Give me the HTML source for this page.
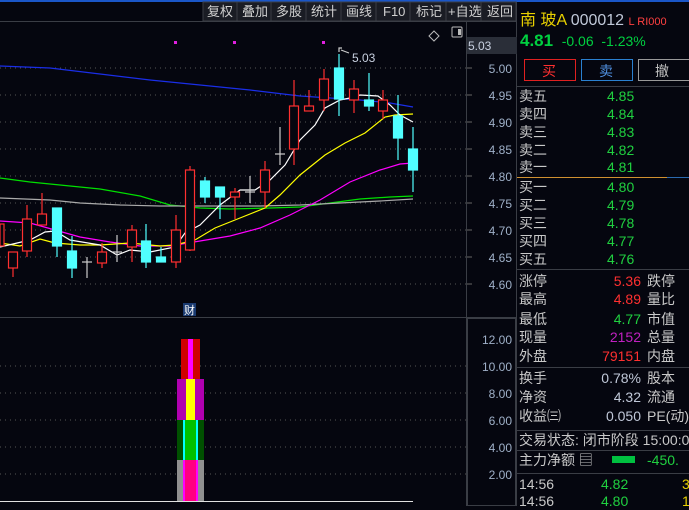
<!DOCTYPE html>
<html><head><meta charset="utf-8"><style>
*{margin:0;padding:0;box-sizing:border-box}
body{width:689px;height:506px;background:#05060f;overflow:hidden;position:relative;font-family:"Liberation Sans","Noto Sans CJK SC",sans-serif;}
.a{position:absolute;white-space:nowrap}
.r{position:absolute;left:519px;width:170px;height:18px;font-size:14px;line-height:18px;color:#c8c8c8;white-space:nowrap}
.r span{position:absolute;white-space:nowrap}
</style></head><body>
<svg class="a" style="left:0;top:0" width="689" height="506">
<rect x="0" y="0" width="689" height="2" fill="#1a56c8"/>
<g fill="#1a1c24" stroke="#3a3d45"><rect x="203" y="2" width="313" height="19"/></g>
<g stroke="#3a3d45"><line x1="237" y1="2" x2="237" y2="21"/><line x1="271" y1="2" x2="271" y2="21"/><line x1="306" y1="2" x2="306" y2="21"/><line x1="341" y1="2" x2="341" y2="21"/><line x1="376" y1="2" x2="376" y2="21"/><line x1="410" y1="2" x2="410" y2="21"/><line x1="446" y1="2" x2="446" y2="21"/><line x1="481" y1="2" x2="481" y2="21"/></g>
<line x1="0" y1="21.5" x2="516" y2="21.5" stroke="#3a3d45"/>
<g font-size="13" fill="#d0d0d0" font-family="Liberation Sans,Noto Sans CJK SC,sans-serif">
<text x="207" y="16">复权</text><text x="242" y="16">叠加</text><text x="276" y="16">多股</text><text x="311" y="16">统计</text><text x="346" y="16">画线</text><text x="383" y="16">F10</text><text x="416" y="16">标记</text><text x="448" y="16">+自选</text><text x="487" y="16">返回</text>
</g>
<line x1="466.5" y1="22" x2="466.5" y2="506" stroke="#3a3d45"/>
<line x1="516.5" y1="2" x2="516.5" y2="506" stroke="#3a3d45"/>
<line x1="0" y1="317.5" x2="516" y2="317.5" stroke="#3a3d45"/>
<rect x="467" y="37" width="50" height="17" fill="#2a2e38"/>
<text x="468" y="50" font-size="12" fill="#c8d0e0">5.03</text>
<g stroke="#555" stroke-dasharray="1,4">
<line x1="0" y1="68" x2="466" y2="68"/><line x1="0" y1="95" x2="466" y2="95"/><line x1="0" y1="122" x2="466" y2="122"/><line x1="0" y1="149" x2="466" y2="149"/><line x1="0" y1="176" x2="466" y2="176"/><line x1="0" y1="203" x2="466" y2="203"/><line x1="0" y1="230" x2="466" y2="230"/><line x1="0" y1="257" x2="466" y2="257"/><line x1="0" y1="284" x2="466" y2="284"/>
<line x1="0" y1="366" x2="466" y2="366"/><line x1="0" y1="393" x2="466" y2="393"/><line x1="0" y1="420" x2="466" y2="420"/><line x1="0" y1="447" x2="466" y2="447"/><line x1="0" y1="474" x2="466" y2="474"/>
</g>
<g stroke="#666"><line x1="467" y1="68" x2="472" y2="68"/><line x1="467" y1="95" x2="472" y2="95"/><line x1="467" y1="122" x2="472" y2="122"/><line x1="467" y1="149" x2="472" y2="149"/><line x1="467" y1="176" x2="472" y2="176"/><line x1="467" y1="203" x2="472" y2="203"/><line x1="467" y1="230" x2="472" y2="230"/><line x1="467" y1="257" x2="472" y2="257"/><line x1="467" y1="284" x2="472" y2="284"/></g>
<g font-size="12" fill="#9fb0c8" text-anchor="end">
<text x="512" y="73">5.00</text><text x="512" y="100">4.95</text><text x="512" y="127">4.90</text><text x="512" y="154">4.85</text><text x="512" y="181">4.80</text><text x="512" y="208">4.75</text><text x="512" y="235">4.70</text><text x="512" y="262">4.65</text><text x="512" y="289">4.60</text>
<text x="512" y="344">12.00</text><text x="512" y="371">10.00</text><text x="512" y="398">8.00</text><text x="512" y="425">6.00</text><text x="512" y="452">4.00</text><text x="512" y="479">2.00</text>
</g>
<rect x="467.5" y="318.5" width="48" height="187" fill="none" stroke="#3a3d45"/>
<path d="M434 31 l5 5 -5 5 -5 -5z" fill="none" stroke="#bbb"/>
<rect x="452" y="27" width="10" height="10" fill="none" stroke="#bbb" rx="1"/><rect x="458" y="29" width="3" height="6" fill="#bbb"/>
<g fill="#e020e0"><rect x="174" y="41" width="3" height="3"/><rect x="233" y="41" width="3" height="3"/><rect x="322" y="41" width="3" height="3"/></g>
<g fill="none" stroke-width="1.2">
<polyline stroke="#1a2ee8" points="0,66 50,68 100,74 150,80 200,85 250,90 300,96 330,98 360,100 390,103 413,107"/>
<polyline stroke="#00e000" points="0,178 30,182 60,185 100,189 140,196 170,205 200,208 230,209 270,208 300,207 330,203 360,199 390,197 413,196"/>
<polyline stroke="#aaaaaa" points="0,198 50,200 80,203 120,205 160,206 200,206 260,206 300,205 340,203 380,201 413,199"/>
<polyline stroke="#ff00ff" points="0,221 30,223 55,230 80,237 110,242 140,246 170,246 200,241 230,236 260,228 290,215 320,200 350,182 380,170 400,164 413,163"/>
<polyline stroke="#ffff00" points="0,243 20,246 40,239 55,243 80,245 100,245 130,243 160,246 175,245 195,240 215,228 240,218 265,208 280,195 300,175 325,155 345,143 365,133 385,117 395,115 413,114"/>
<polyline stroke="#ffffff" points="0,247 30,240 45,232 55,231 70,240 100,245 117,255 130,250 150,252 175,247 185,233 200,225 220,205 240,190 255,190 270,180 285,165 300,140 315,125 325,108 340,100 350,98 360,95 378,96 390,105 400,115 413,122"/>
</g>
<g stroke="#ff3030" fill="#05060f" stroke-width="1.2">
<rect x="0" y="224" width="4" height="22"/>
<line x1="13" y1="268" x2="13" y2="277"/><rect x="8.5" y="252" width="9" height="16"/>
<line x1="27" y1="205" x2="27" y2="257"/><rect x="22.5" y="219" width="9" height="32"/>
<line x1="42" y1="193" x2="42" y2="214"/><rect x="37.5" y="214" width="9" height="11"/>
<line x1="102" y1="243" x2="102" y2="268"/><rect x="97.5" y="252" width="9" height="11"/>
<line x1="132" y1="225" x2="132" y2="262"/><rect x="127.5" y="230" width="9" height="17"/>
<line x1="176" y1="215" x2="176" y2="268"/><rect x="171.5" y="230" width="9" height="32"/>
<line x1="190" y1="166" x2="190" y2="251"/><rect x="185.5" y="170" width="9" height="80"/>
<line x1="235" y1="188" x2="235" y2="219"/><rect x="230.5" y="192" width="9" height="5"/>
<line x1="265" y1="161" x2="265" y2="208"/><rect x="260.5" y="170" width="9" height="22"/>
<line x1="294" y1="80" x2="294" y2="165"/><rect x="289.5" y="106" width="9" height="43"/>
<line x1="309" y1="90" x2="309" y2="106"/><rect x="304.5" y="106" width="9" height="5"/>
<line x1="324" y1="69" x2="324" y2="111"/><rect x="319.5" y="79" width="9" height="21"/>
<line x1="354" y1="80" x2="354" y2="113"/><rect x="349.5" y="89" width="9" height="11"/>
<line x1="383" y1="90" x2="383" y2="119"/><rect x="378.5" y="100" width="9" height="11"/>
</g>
<g stroke="#50ffff" fill="#50ffff" stroke-width="1.2">
<line x1="57" y1="208" x2="57" y2="257"/><rect x="52.5" y="208" width="9" height="38"/>
<line x1="72" y1="236" x2="72" y2="278"/><rect x="67.5" y="251" width="9" height="17"/>
<line x1="146" y1="224" x2="146" y2="268"/><rect x="141.5" y="241" width="9" height="21"/>
<line x1="161" y1="247" x2="161" y2="262"/><rect x="156.5" y="257" width="9" height="5"/>
<line x1="205" y1="177" x2="205" y2="203"/><rect x="200.5" y="181" width="9" height="16"/>
<line x1="220" y1="187" x2="220" y2="219"/><rect x="215.5" y="187" width="9" height="10"/>
<line x1="339" y1="54" x2="339" y2="116"/><rect x="334.5" y="68" width="9" height="31"/>
<line x1="369" y1="73" x2="369" y2="111"/><rect x="364.5" y="100" width="9" height="6"/>
<line x1="398" y1="95" x2="398" y2="160"/><rect x="393.5" y="116" width="9" height="22"/>
<line x1="413" y1="127" x2="413" y2="192"/><rect x="408.5" y="149" width="9" height="21"/>
</g>
<g stroke="#cccccc" stroke-width="1.2">
<line x1="87" y1="257" x2="87" y2="278"/><line x1="82" y1="262" x2="92" y2="262"/>
<line x1="117" y1="235" x2="117" y2="262"/><line x1="112" y1="252" x2="122" y2="252"/>
<line x1="250" y1="176" x2="250" y2="203"/><line x1="245" y1="192" x2="255" y2="192"/>
<line x1="280" y1="127" x2="280" y2="165"/><line x1="275" y1="154" x2="285" y2="154"/>
<path d="M339 52 V48 h3 M341 50 l8 3" fill="none"/>
</g>
<text x="352" y="62" font-size="12" fill="#c8d0e0">5.03</text>
<rect x="183" y="303" width="13" height="13" fill="#1a3a70"/>
<text x="184" y="314" font-size="11" fill="#fff">财</text>
<rect x="181" y="339" width="19" height="40" fill="#d00000"/><rect x="188" y="339" width="5" height="40" fill="#ff00ff"/>
<rect x="177" y="379" width="27" height="41" fill="#b000b0"/><rect x="186" y="379" width="9" height="41" fill="#ffff00"/>
<rect x="177" y="420" width="27" height="40" fill="#005000"/><rect x="183" y="420" width="15" height="40" fill="#00ffff"/><rect x="185" y="420" width="11" height="40" fill="#00c000"/>
<rect x="177" y="460" width="27" height="42" fill="#909090"/><rect x="183" y="460" width="15" height="42" fill="#ff00ff"/><rect x="185" y="460" width="11" height="42" fill="#ff0080"/>
<line x1="0" y1="501.5" x2="413" y2="501.5" stroke="#e0e0e0"/>
<g stroke="#3a3d45"><line x1="517" y1="86.5" x2="689" y2="86.5"/><line x1="517" y1="269.5" x2="689" y2="269.5"/><line x1="517" y1="367.5" x2="689" y2="367.5"/><line x1="517" y1="430.5" x2="689" y2="430.5"/><line x1="517" y1="450.5" x2="689" y2="450.5"/><line x1="517" y1="473.5" x2="689" y2="473.5"/></g>
<line x1="517" y1="177.5" x2="667" y2="177.5" stroke="#d09030"/><line x1="667" y1="177.5" x2="689" y2="177.5" stroke="#2a6ab0"/>
<rect x="524.5" y="59.5" width="51" height="21" fill="none" stroke="#e02020"/>
<rect x="581.5" y="59.5" width="51" height="21" fill="none" stroke="#2a80d0"/>
<rect x="638.5" y="59.5" width="51" height="21" fill="none" stroke="#999"/>
<rect x="612" y="456" width="23" height="7" fill="#00c040"/>
</svg>
<div class="a" style="left:520px;top:6px;font-size:16px;color:#e8d000">南 玻A <span style="color:#c0c8d8">000012</span> <span style="font-size:11px;color:#ff4040">L RI000</span></div>
<div class="a" style="left:520px;top:31px;font-size:17px;color:#00d040;font-weight:bold">4.81 <span style="font-weight:normal;font-size:14px">&nbsp;-0.06 &nbsp;-1.23%</span></div>
<div class="a" style="left:542px;top:61px;font-size:14px;color:#ff3030">买</div>
<div class="a" style="left:599px;top:61px;font-size:14px;color:#5090e0">卖</div>
<div class="a" style="left:655px;top:61px;font-size:14px;color:#c0c0c0">撤</div>
<div class="r" style="top:87px"><span>卖五</span><span style="left:88px;color:#20d040">4.85</span></div>
<div class="r" style="top:105px"><span>卖四</span><span style="left:88px;color:#20d040">4.84</span></div>
<div class="r" style="top:123px"><span>卖三</span><span style="left:88px;color:#20d040">4.83</span></div>
<div class="r" style="top:141px"><span>卖二</span><span style="left:88px;color:#20d040">4.82</span></div>
<div class="r" style="top:158px"><span>卖一</span><span style="left:88px;color:#20d040">4.81</span></div>
<div class="r" style="top:178px"><span>买一</span><span style="left:88px;color:#20d040">4.80</span></div>
<div class="r" style="top:196px"><span>买二</span><span style="left:88px;color:#20d040">4.79</span></div>
<div class="r" style="top:214px"><span>买三</span><span style="left:88px;color:#20d040">4.78</span></div>
<div class="r" style="top:232px"><span>买四</span><span style="left:88px;color:#20d040">4.77</span></div>
<div class="r" style="top:250px"><span>买五</span><span style="left:88px;color:#20d040">4.76</span></div>
<div class="r" style="top:272px"><span>涨停</span><span style="right:48px;color:#ff3030">5.36</span><span style="left:128px">跌停</span></div>
<div class="r" style="top:290px"><span>最高</span><span style="right:48px;color:#ff3030">4.89</span><span style="left:128px">量比</span></div>
<div class="r" style="top:310px"><span>最低</span><span style="right:48px;color:#20d040">4.77</span><span style="left:128px">市值</span></div>
<div class="r" style="top:328px"><span>现量</span><span style="right:48px;color:#c020c0">2152</span><span style="left:128px">总量</span></div>
<div class="r" style="top:347px"><span>外盘</span><span style="right:48px;color:#ff3030">79151</span><span style="left:128px">内盘</span></div>
<div class="r" style="top:369px"><span>换手</span><span style="right:48px;color:#c0c8d8">0.78%</span><span style="left:128px">股本</span></div>
<div class="r" style="top:388px"><span>净资</span><span style="right:48px;color:#c0c8d8">4.32</span><span style="left:128px">流通</span></div>
<div class="r" style="top:407px"><span>收益㈢</span><span style="right:48px;color:#c0c8d8">0.050</span><span style="left:128px">PE(动)</span></div>
<div class="r" style="top:431px;overflow:hidden"><span>交易状态: 闭市阶段 15:00:00</span></div>
<div class="r" style="top:451px"><span>主力净额 ▤</span><span style="left:128px;color:#20d040">-450.</span></div>
<div class="r" style="top:475px"><span>14:56</span><span style="left:82px;color:#20d040">4.82</span><span style="left:163px;color:#e8d000">3</span></div>
<div class="r" style="top:492px"><span>14:56</span><span style="left:82px;color:#20d040">4.80</span><span style="left:163px;color:#e8d000">1</span></div>
</body></html>
